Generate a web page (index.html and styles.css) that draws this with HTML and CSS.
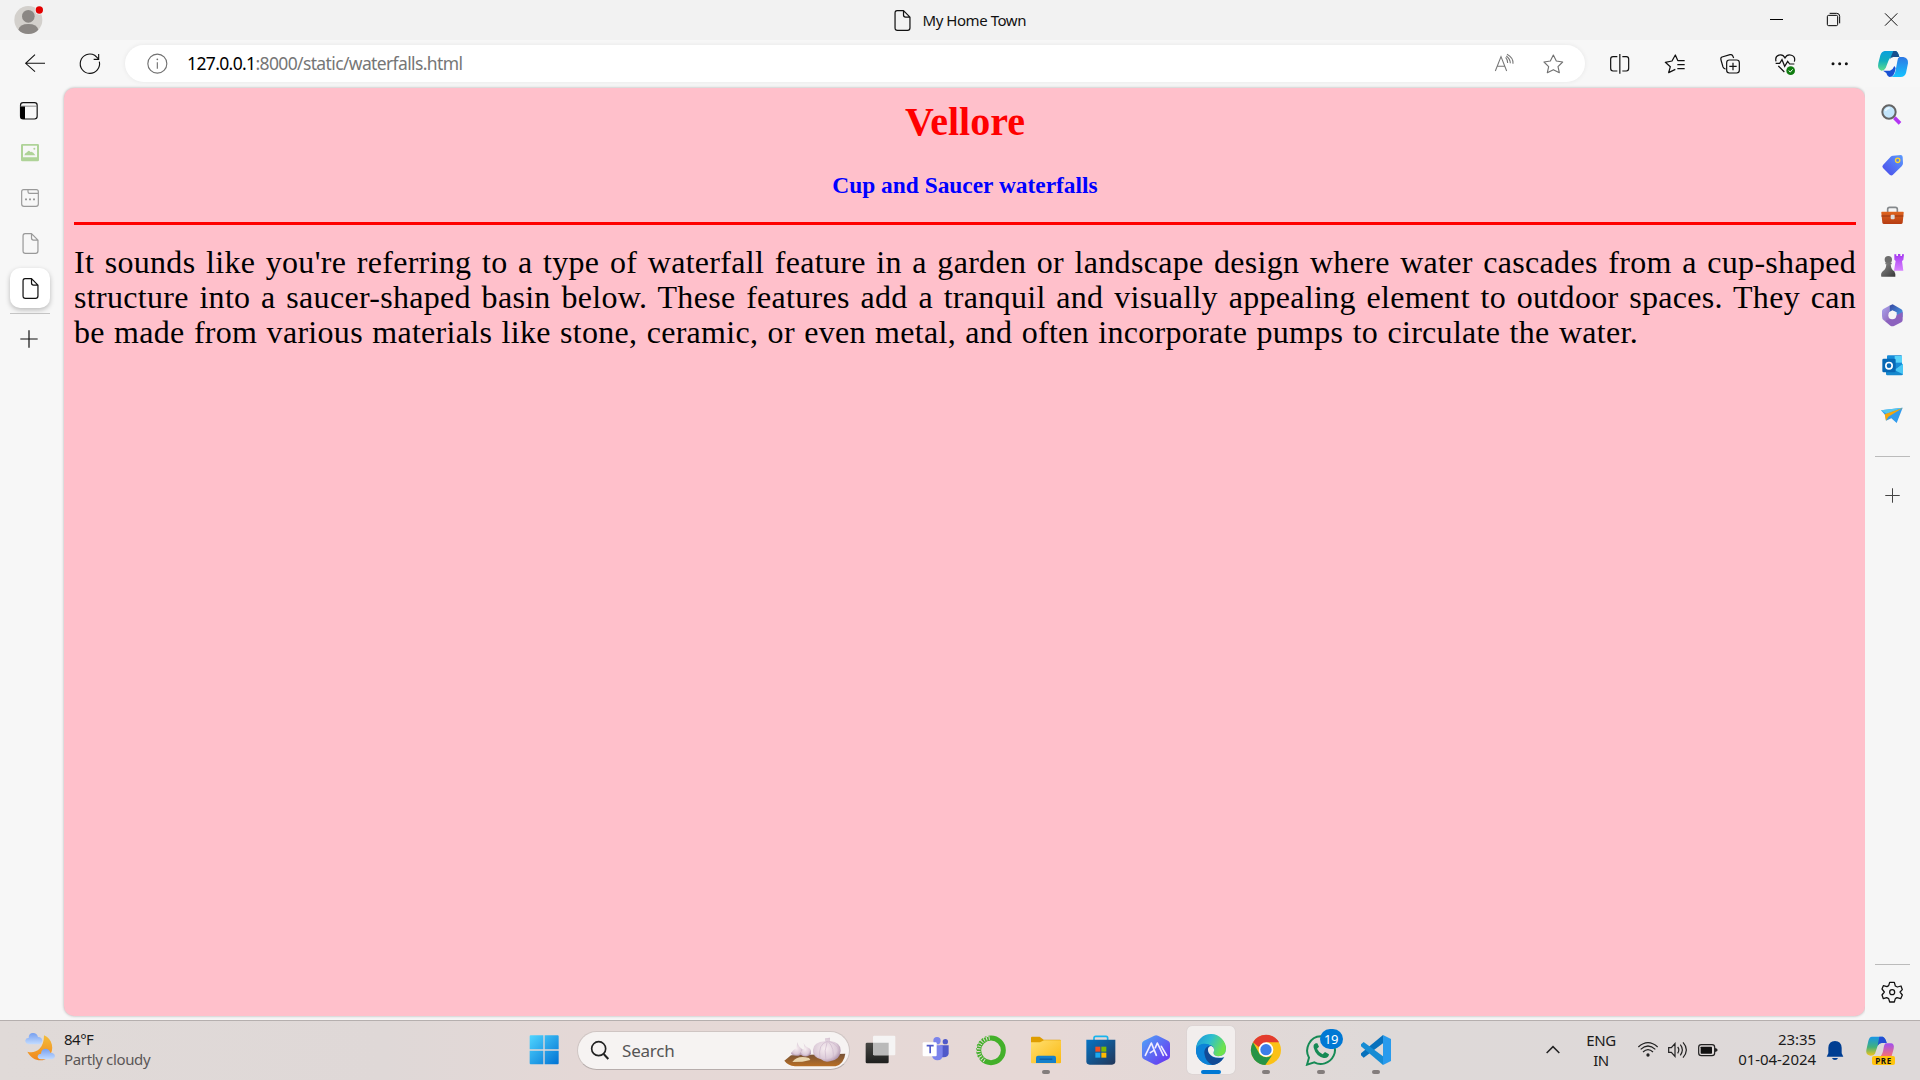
FILE: index.html
```html
<!DOCTYPE html>
<html lang="en">
<head>
<meta charset="utf-8">
<title>My Home Town</title>
<link rel="stylesheet" href="styles.css">
</head>
<body>
<svg class="defs" aria-hidden="true">
  <defs>
    <linearGradient id="gSky" x1="0" y1="0" x2="1" y2="1"><stop offset="0" stop-color="#50d5ff"/><stop offset="1" stop-color="#0072d3"/></linearGradient>
    <linearGradient id="gTeal" x1="0" y1="0" x2="0" y2="1"><stop offset="0" stop-color="#0aa0dd"/><stop offset=".5" stop-color="#13aebd"/><stop offset="1" stop-color="#61de8c"/></linearGradient>
    <linearGradient id="gBlue" x1="0" y1="0" x2="0" y2="1"><stop offset="0" stop-color="#2f78e4"/><stop offset="1" stop-color="#15c3ff"/></linearGradient>
    <linearGradient id="gTag" x1="1" y1="0" x2="0" y2="1"><stop offset="0" stop-color="#5b9bff"/><stop offset="1" stop-color="#4a48e8"/></linearGradient>
    <linearGradient id="gCase" x1="0" y1="0" x2="0" y2="1"><stop offset="0" stop-color="#e0651f"/><stop offset="1" stop-color="#b53c12"/></linearGradient>
    <linearGradient id="gRook" x1="0" y1="0" x2="0" y2="1"><stop offset="0" stop-color="#a436f0"/><stop offset="1" stop-color="#d884ff"/></linearGradient>
    <linearGradient id="gPawn" x1="0" y1="0" x2="1" y2="1"><stop offset="0" stop-color="#8c8c8c"/><stop offset="1" stop-color="#383838"/></linearGradient>
    <linearGradient id="gHexA" x1="0" y1="0" x2="1" y2="1"><stop offset="0" stop-color="#36459f"/><stop offset="1" stop-color="#4aa3ee"/></linearGradient>
    <linearGradient id="gHexB" x1="0" y1="0" x2="1" y2="1"><stop offset="0" stop-color="#a9a5ef"/><stop offset="1" stop-color="#8b5aae"/></linearGradient>
    <linearGradient id="gFolder" x1="0" y1="0" x2="1" y2="1"><stop offset="0" stop-color="#ffdf70"/><stop offset="1" stop-color="#fbb911"/></linearGradient>
    <linearGradient id="gStore" x1="0" y1="0" x2="1" y2="1"><stop offset="0" stop-color="#0674c4"/><stop offset="1" stop-color="#223658"/></linearGradient>
    <linearGradient id="gAi" x1="0" y1="0" x2="1" y2="1"><stop offset="0" stop-color="#4fa6f7"/><stop offset="1" stop-color="#6a2df0"/></linearGradient>
    <linearGradient id="gEdgeTop" x1="0" y1="0" x2="1" y2=".4"><stop offset="0" stop-color="#1b93d8"/><stop offset=".5" stop-color="#2dbed0"/><stop offset="1" stop-color="#6fe34b"/></linearGradient>
    <linearGradient id="gMoon" x1="0" y1="0" x2="0" y2="1"><stop offset="0" stop-color="#f3bd3a"/><stop offset="1" stop-color="#f1871e"/></linearGradient>
    <linearGradient id="gCloud" x1="0" y1="0" x2="0" y2="1"><stop offset="0" stop-color="#769ff0"/><stop offset="1" stop-color="#c3dcff"/></linearGradient>
    <linearGradient id="gRain" x1="0" y1="0" x2="0" y2="1"><stop offset="0" stop-color="#1695e8"/><stop offset=".55" stop-color="#43b17b"/><stop offset="1" stop-color="#f3c51a"/></linearGradient>
    <linearGradient id="gPink" x1="0" y1="0" x2="0" y2="1"><stop offset="0" stop-color="#a14ff0"/><stop offset="1" stop-color="#ff7368"/></linearGradient>
    <radialGradient id="gGarlic" cx=".45" cy=".45" r=".6"><stop offset="0" stop-color="#f7eef1"/><stop offset=".7" stop-color="#dccbd8"/><stop offset="1" stop-color="#a98da8"/></radialGradient>
    <linearGradient id="gBoard" x1="0" y1="0" x2="0" y2="1"><stop offset="0" stop-color="#755238"/><stop offset="1" stop-color="#b96f25"/></linearGradient>
    <linearGradient id="gDark" x1="0" y1="0" x2="0" y2="1"><stop offset="0" stop-color="#484845"/><stop offset="1" stop-color="#1e1f1e"/></linearGradient>
    <symbol id="page" viewBox="0 0 48 62"><path d="M8 2H27L46 21V53Q46 60 39 60H9Q2 60 2 53V9Q2 2 8 2ZM27 3V15Q27 21 33 21H45" fill="none" stroke="currentColor" stroke-width="3.6" stroke-linejoin="round"/></symbol>
    <symbol id="plus" viewBox="0 0 54 54"><path d="M27 1V53M1 27H53" stroke="currentColor" stroke-width="3.6"/></symbol>
  </defs>
</svg>

<header class="titlebar">
  <div class="profile">
    <svg width="32" height="32" viewBox="38 12 96 96"><circle cx="84" cy="60" r="42" fill="#d3d0cc"/><circle cx="84" cy="49" r="19" fill="#8b8784"/><path d="M54 89Q58 72 84 72Q110 72 114 89Q102 102 84 102Q66 102 54 89Z" fill="#8b8784"/><circle cx="117" cy="30" r="14" fill="#f2f2f2"/><circle cx="117" cy="30" r="11" fill="#e30000"/></svg>
  </div>
  <div class="window-title"><svg width="17" height="21"><use href="#page"/></svg><span>My Home Town</span></div>
  <div class="window-buttons">
    <svg width="57" height="40" viewBox="804 0 171 120"><path d="M870 58.5H909" stroke="#000" stroke-width="3"/></svg>
    <svg width="57" height="40" viewBox="975 0 171 120"><g fill="none" stroke="#000" stroke-width="3"><rect x="1042" y="46" width="31" height="31" rx="4"/><path d="M1049 40H1070Q1079 40 1079 49V70"/></g></svg>
    <svg width="58" height="40" viewBox="1146 0 174 120"><path d="M1215 40L1252 77M1252 40L1215 77" stroke="#111" stroke-width="3"/></svg>
  </div>
</header>

<div class="toolbar">
  <svg width="70" height="47" viewBox="0 120 210 141"><path d="M135 190H77M105 164L77 190L105 215" fill="none" stroke="#111" stroke-width="3.2"/></svg>
  <svg width="40" height="47" viewBox="210 120 120 141"><path d="M298 185A29 29 0 1 1 284 166L295 176M296 162V178H281" fill="none" stroke="#111" stroke-width="3.4"/></svg>
  <div class="address">
    <svg width="30" height="37" viewBox="426 135 90 111"><circle cx="472" cy="191" r="28.5" fill="none" stroke="#717171" stroke-width="3.4"/><path d="M472 187V206" stroke="#717171" stroke-width="3.4"/><circle cx="472" cy="178" r="2.6" fill="#717171"/></svg>
    <span class="url"><b>127.0.0.1</b>:8000/static/waterfalls.html</span>
    <svg width="49" height="37" viewBox="-2 135 147 111"><path d="M47 213L64 170L81 213M53 199H75M78 172Q84 179 84 189M82 163Q101 173 100 191M80 168Q92 177 92 190" fill="none" stroke="#767676" stroke-width="3.2"/></svg>
    <svg width="49" height="37" viewBox="145 135 147 111"><path d="M221 165L230 183L249 186L235 200L239 218L221 209L203 218L207 200L193 186L212 183Z" fill="none" stroke="#717171" stroke-width="3.4" stroke-linejoin="round"/></svg>
  </div>
  <div class="tools">
    <svg width="55" height="47" viewBox="335 120 165 141"><path d="M411 170H398Q391 170 391 177V205Q391 213 398 213H411M426 170H438Q445 170 445 177V205Q445 213 438 213H426M418.500 162V221" fill="none" stroke="#111" stroke-width="3.6"/></svg>
    <svg width="55" height="47" viewBox="501 120 165 141"><path d="M594 183L586 165L576 183L556 187L571 200L566 218L586 208M594 182H614M592 194H614M592 206H614" fill="none" stroke="#111" stroke-width="3.7" stroke-linejoin="round"/></svg>
    <svg width="55" height="47" viewBox="666 120 165 141"><rect x="740" y="180" width="38" height="39" rx="8" fill="none" stroke="#111" stroke-width="3.6"/><path d="M759 188V211M748 199H770M761 174L758 167Q756 163 750 164L726 171Q721 173 723 180L729 201Q732 207 737 207" fill="none" stroke="#111" stroke-width="3.6"/></svg>
    <svg width="55" height="47" viewBox="831 120 165 141"><path d="M888 184C883 164 907 158 915 174C923 158 949 164 943 185M887 190H899L906 179L914 199L923 184L929 192H943M895 198L913 216" fill="none" stroke="#111" stroke-width="3.6"/><circle cx="932" cy="212" r="13" fill="#107c10"/><path d="M926 212L931 216L938 208" fill="none" stroke="#fff" stroke-width="3"/></svg>
    <svg width="55" height="47" viewBox="997 120 165 141"><g fill="#111"><circle cx="1060" cy="191" r="4.500"/><circle cx="1080" cy="191" r="4.500"/><circle cx="1100" cy="191" r="4.500"/></g></svg>
  </div>
  <svg width="53" height="47" viewBox="1161 120 159 141"><path d="M1214 153H1247Q1254 155 1258 171H1240Q1230 171 1226 181L1217 204Q1212 213 1204 212Q1191 208 1195 190L1201 166Q1205 154 1214 153Z" fill="url(#gTeal)"/><path d="M1240 153H1247Q1254 155 1258 171H1240Q1232 171 1229 179Z" fill="#174f8e"/><path d="M1258 171H1270Q1285 173 1284 190L1278 219Q1274 231 1262 231H1233Q1244 228 1247 211L1252 184Q1253 174 1258 171Z" fill="url(#gBlue)"/><path d="M1209 212H1230Q1239 209 1243 198L1247 204Q1243 231 1229 231Q1222 230 1219 219Z" fill="#1851d3"/></svg>
</div>

<main class="workspace">
  <nav class="tabs">
    <svg class="t1" width="20" height="20" viewBox="57 302 60 60"><rect x="61.500" y="307" width="50" height="49" rx="8" fill="none" stroke="#111" stroke-width="3.500"/><path d="M61 318H75V356H68Q61 356 61 349Z" fill="#000"/><path d="M61 317.500H112" stroke="#777" stroke-width="2.500"/></svg>
    <svg class="t2" width="20" height="20" viewBox="60 430 60 60"><path d="M67 433H113Q117 433 117 437V481Q117 485 113 485H67Q63 485 63 481V437Q63 433 67 433ZM69 438V473H111V438Z" fill="#afd398" fill-rule="evenodd"/><path d="M73 467Q75 459 81 458Q86 449 91 457Q98 453 106 467Z" fill="#afd398"/><circle cx="103" cy="447" r="3" fill="#afd398"/></svg>
    <svg class="t3" width="20" height="20" viewBox="60 564 60 60"><path d="M71 569H109Q115 569 115 575V612Q115 619 108 619H72Q65 619 65 612V575Q65 569 71 569ZM84 570V575Q84 580 89 580H114" fill="none" stroke="#999" stroke-width="3.500"/><path d="M75 598H81M87 598H93M99 598H105" stroke="#999" stroke-width="5"/></svg>
    <svg class="t4" width="17" height="21"><use href="#page"/></svg>
    <div class="active-tab"><svg width="17" height="21"><use href="#page"/></svg></div>
    <i class="tab-line"></i>
    <svg class="t6" width="18" height="18"><use href="#plus"/></svg>
  </nav>

  <article class="document">
    <h1>Vellore</h1>
    <h2>Cup and Saucer waterfalls</h2>
    <hr>
    <p><span class="l1">It sounds like you're referring to a type of waterfall feature in a garden or landscape design where water cascades from a cup-shaped</span> <span class="l2">structure into a saucer-shaped basin below. These features add a tranquil and visually appealing element to outdoor spaces. They can</span> <span class="l3">be made from various materials like stone, ceramic, or even metal, and often incorporate pumps to circulate the water.</span></p>
  </article>

  <aside class="sidebar">
    <svg width="28" height="50" viewBox="114 30 84 150"><path d="M163 113L180 130" stroke="#b335f3" stroke-width="11"/><circle cx="147" cy="96" r="20" fill="#c3e5fb" stroke="#646464" stroke-width="6"/><path d="M136 93Q140 84 149 84" stroke="#e9f7ff" stroke-width="5" fill="none"/></svg>
    <svg width="28" height="50" viewBox="114 181 84 150"><path d="M159 228L183 226Q188 227 188 232L189 251Q189 256 185 260L158 286Q154 289 149 285L129 265Q125 261 129 256L152 231Q155 228 159 228Z" fill="url(#gTag)"/><circle cx="173" cy="242" r="6.500" fill="#5b83ea" stroke="#ffd52b" stroke-width="4"/></svg>
    <svg width="28" height="50" viewBox="114 331 84 150"><path d="M143 397V389Q143 383 149 383H166Q172 383 172 389V397" fill="none" stroke="#84888b" stroke-width="5"/><path d="M126 396H189Q192 396 191 400L188 429Q187 433 183 433H132Q128 433 127 429L124 400Q123 396 126 396Z" fill="url(#gCase)"/><path d="M124 409H190" stroke="#963615" stroke-width="3"/><rect x="152" y="405" width="12" height="14" rx="3" fill="#ddd"/></svg>
    <svg width="28" height="50" viewBox="114 480 84 150"><path d="M163 523H169V528H174V522H181V528H186V523H192L190 540L186 543L190 572H162L167 543L163 539Z" fill="url(#gRook)"/><circle cx="145" cy="539" r="11" fill="#6d6d6d"/><path d="M136 548H155V553H152Q153 569 163 574Q168 584 166 590H124Q121 580 129 573Q138 568 139 553H136Z" fill="url(#gPawn)"/></svg>
    <svg width="28" height="50" viewBox="114 630 84 150"><path d="M148 677L158 673L184 688Q188 690 188 696V712L170 705V697L157 691L148 697Z" fill="url(#gHexA)"/><path d="M148 677V705Q148 713 161 720L148 727L131 720Q126 717 126 708V694Q126 690 130 687Z" fill="url(#gHexB)"/><path d="M128 718Q137 725 148 718L170 705L188 696V720Q188 724 184 727L162 738Q156 740 151 737Z" fill="#8c62be"/><circle cx="157" cy="706" r="12" fill="#f6f6f6"/></svg>
    <svg width="28" height="50" viewBox="114 780 84 150"><rect x="141" y="826" width="45" height="45" rx="3" fill="#168bd8"/><path d="M164 828H186V848H164Z" fill="#58d3fa"/><path d="M138 857L163 867L189 851V882Q189 886 184 886H142Q138 886 138 882Z" fill="#1688ce"/><path d="M163 870L189 851V883Z" fill="#49c7f5"/><rect x="127" y="836" width="40" height="41" rx="4" fill="#0768b5"/><circle cx="147" cy="857" r="9.500" fill="none" stroke="#fff" stroke-width="5"/></svg>
    <svg width="28" height="50" viewBox="114 930 84 150"><path d="M123 991L188 983L170 1029L154 1015L138 1022L136 1006Z" fill="#319bed"/><path d="M123 991L188 983L139 1001Z" fill="#56c7ef"/><path d="M134 1003L188 984L145 1010L138 1022Z" fill="#f5a70c"/></svg>
    <i class="side-line"></i>
    <svg class="add" width="15" height="15"><use href="#plus"/></svg>
    <i class="side-line last"></i>
    <svg class="gear" width="24" height="24" viewBox="121 121 72 72"><path d="M150 128H164L167 139L173 142L184 139L188 150L181 157L188 166L183 177L172 174L167 177L164 187H150L147 177L141 174L131 177L127 166L134 157L127 148L131 138L142 141L147 138Z" fill="none" stroke="#111" stroke-width="3.800" stroke-linejoin="round"/><circle cx="157.500" cy="157.500" r="7.500" fill="none" stroke="#111" stroke-width="3.800"/></svg>
  </aside>
</main>

<footer class="taskbar">
  <div class="weather">
    <svg width="34" height="36" viewBox="69 60 102 108"><path d="M132 79C157 89 165 122 147 143C128 162 97 156 82 128C100 134 132 127 132 79Z" fill="url(#gMoon)"/><path d="M87 106Q75 104 76 94Q78 86 86 87Q86 72 99 72Q111 72 114 84Q126 84 127 95Q126 106 115 106Z" fill="url(#gCloud)"/><path d="M123 151Q112 150 113 141Q115 134 123 134Q124 119 138 119Q149 120 151 131Q164 131 165 142Q163 151 153 151Z" fill="url(#gCloud)"/></svg>
    <div><span class="temp">84°F</span><span class="sky">Partly cloudy</span></div>
  </div>

  <div class="apps">
    <svg width="30" height="30" viewBox="0 0 90 90"><path d="M2 4Q2 1 5 1H43V43H2ZM47 1H86Q89 1 89 4V43H47ZM2 47H43V88H5Q2 88 2 85ZM47 47H89V85Q89 88 86 88H47Z" fill="url(#gSky)"/></svg>
    <div class="search">
      <svg width="20" height="20" viewBox="241 90 60 60"><circle cx="267" cy="116" r="21" fill="none" stroke="#222" stroke-width="5"/><path d="M282 132L296 147" stroke="#222" stroke-width="6"/></svg>
      <span>Search</span>
      <svg class="garlic" width="62" height="30" viewBox="825 82 186 90"><path d="M826 153L846 137L1009 132Q1005 162 980 170H858Q836 167 826 153Z" fill="url(#gBoard)"/><path d="M850 157Q866 135 900 145L904 151L880 156Z" fill="#ead6ae"/><path d="M865 98Q868 111 880 119Q886 135 869 138Q848 139 846 130Q850 122 862 115Z" fill="url(#gGarlic)"/><path d="M884 101Q889 112 903 117Q912 134 895 140Q875 142 874 129Q880 120 887 116Z" fill="url(#gGarlic)"/><path d="M948 86L963 84L963 94Q995 97 995 123Q993 149 966 154Q948 160 936 149Q910 142 912 120Q914 97 948 95Z" fill="url(#gGarlic)"/><path d="M955 95Q926 103 933 146M955 95Q944 122 951 154M957 95Q979 116 971 151M959 95Q984 101 990 124" fill="none" stroke="#cbb5ca" stroke-width="2"/></svg>
    </div>
    <div class="app"><svg width="32" height="30" viewBox="1066 77 96 90"><rect x="1068" y="100" width="69" height="62" rx="4" fill="url(#gDark)"/><rect x="1090" y="79" width="67" height="59" rx="4" fill="#f5f4f4"/><path d="M1090 100H1137V138H1094Q1090 138 1090 134Z" fill="#bababa"/></svg></div>
    <div class="app"><svg width="28" height="30" viewBox="1237 77 84 90"><circle cx="1282" cy="94" r="11" fill="#7b83eb"/><circle cx="1307" cy="97" r="8" fill="#5059c9"/><path d="M1292 108H1317V132Q1316 144 1302 144H1292Z" fill="#5059c9"/><path d="M1267 108H1299V136Q1299 153 1283 153Q1271 153 1267 140Z" fill="#7b83eb"/><rect x="1239" y="99" width="42" height="42" rx="3" fill="#fff"/><path d="M1251 109H1272M1261.500 109V132" stroke="#5059c9" stroke-width="5"/></svg></div>
    <div class="app"><svg width="32" height="32" viewBox="45 71 96 96"><circle cx="93" cy="120" r="37" fill="none" stroke="#43b02a" stroke-width="15"/><path d="M89 83A37 37 0 0 0 75 152" fill="none" stroke="#e5d8d6" stroke-width="11" stroke-dasharray="3 5"/><path d="M85 77A43 43 0 0 0 62 151" fill="none" stroke="#e5d8d6" stroke-width="4" stroke-dasharray="6 6"/></svg></div>
    <div class="app running"><svg width="32" height="32" viewBox="210 73 96 96"><path d="M213 84Q213 81 216 81H239L251 90H300Q303 90 303 94V115H213Z" fill="#df9d00"/><path d="M213 98H240L252 92H303V158Q303 161 300 161H216Q213 161 213 158Z" fill="url(#gFolder)"/><path d="M228 160V144Q228 138 234 138H282Q288 138 288 144V160Z" fill="#1580cb"/><path d="M239 148.500H277" stroke="#07519a" stroke-width="3"/></svg></div>
    <div class="app"><svg width="32" height="32" viewBox="374 73 96 96"><path d="M401 93V85Q401 80 406 80H437Q442 80 442 85V93" fill="none" stroke="#19b4ed" stroke-width="5"/><path d="M378 90H465V155Q465 165 455 165H388Q378 165 378 155Z" fill="url(#gStore)"/><path d="M405 111H420V126H405Z" fill="#f25022"/><path d="M423 111H438V126H423Z" fill="#7fba00"/><path d="M405 129H420V144H405Z" fill="#1ba9ef"/><path d="M423 129H438V144H423Z" fill="#ffb900"/></svg></div>
    <div class="app"><svg width="32" height="32" viewBox="540 72 96 96"><path d="M583 77Q588 74 594 77L624 92Q630 95 630 101V139Q630 145 624 148L594 163Q588 166 582 163L552 148Q546 145 546 139V101Q546 95 552 92Z" fill="url(#gAi)"/><path d="M556 136L574 99L589 136M571 128L582 121M586 113L592 99L610 136M604 109L620 136" fill="none" stroke="#f1edff" stroke-width="5" stroke-linecap="round" stroke-linejoin="round"/></svg></div>
    <div class="app current"><svg width="32" height="32" viewBox="705 72 96 96"><circle cx="753" cy="120" r="45" fill="#0b67b8"/><path d="M708 116A45 45 0 0 1 798 118Q798 138 775 139Q758 137 761 126Q767 107 745 104Q721 99 708 116Z" fill="url(#gEdgeTop)"/><path d="M708 118C714 98 745 98 752 108Q731 111 733 130Q735 159 765 163Q746 168 729 158Q706 144 708 118Z" fill="#0c83d7"/><path d="M733 126Q736 110 749 108Q742 116 746 128Q757 151 792 142Q777 165 757 165Q735 155 733 126Z" fill="#124b96"/><path d="M745 113Q749 107 754 108Q766 113 761 126Q758 137 775 139Q798 138 798 118L802 118V137L792 142Q760 148 747 130Q742 121 745 113Z" fill="#f2f0ef"/></svg></div>
    <div class="app running"><svg width="32" height="32" viewBox="870 72 96 96"><circle cx="918" cy="120" r="45" fill="#fbc116"/><path d="M879 97Q864 124 883 149Q898 165 916 165L939 132Q923 150 900 134Z" fill="#269447"/><path d="M879 97A45 45 0 0 1 957 97H918V110H895Z" fill="#e33b2e"/><circle cx="918" cy="119" r="22" fill="#fff"/><circle cx="918" cy="119" r="17" fill="#3c7ee8"/></svg></div>
    <div class="app running"><svg width="32" height="32" viewBox="1035 71 96 96"><path d="M1041 163L1047 142C1032 116 1049 79 1082 78C1115 78 1133 111 1121 136C1109 161 1081 166 1063 156Z" fill="none" stroke="#168a55" stroke-width="6"/><path d="M1067 99Q1059 102 1061 112Q1068 137 1091 143Q1105 145 1107 132L1095 125L1088 132Q1076 126 1071 115L1077 109L1072 99Z" fill="#168a55"/></svg><b class="badge">19</b></div>
    <div class="app running"><svg width="32" height="32" viewBox="1200 72 96 96"><path d="M1269 75L1293 87V153L1269 165Z" fill="#299bed"/><path d="M1269 75V100L1211 143L1203 136V130Z" fill="#0871bc"/><path d="M1269 165V139L1211 96L1203 103V109Z" fill="#168cd4"/></svg></div>
  </div>

  <div class="tray">
    <svg class="chev" width="16" height="12" viewBox="135 102 48 36"><path d="M140 129L159 110L178 129" fill="none" stroke="#222" stroke-width="4.500"/></svg>
    <div class="lang"><span>ENG</span><span>IN</span></div>
    <svg class="status" width="84" height="20" viewBox="411 90 252 60"><g fill="none" stroke="#222" stroke-width="3.600"><path d="M415 111Q444 85 473 111M422 118Q444 98 466 118M429 126Q444 112 459 126"/><path d="M506 113H514L525 101V139L514 127H506ZM533 111Q540 119 533 130M541 104Q553 119 541 136M549 97Q569 119 549 143"/><rect x="596" y="104" width="48" height="33" rx="8"/></g><circle cx="444" cy="135" r="5" fill="#222"/><rect x="602" y="110" width="34" height="21" rx="2" fill="#111"/><path d="M645 114Q653 115 653 120Q653 125 645 126Z" fill="#222"/></svg>
    <div class="clock"><span>23:35</span><span>01-04-2024</span></div>
    <svg class="bell" width="18" height="22" viewBox="978 90 54 66"><path d="M980 140L985 130V113Q986 94 1005 93Q1024 94 1025 113V130L1030 140ZM996 144H1014Q1012 150 1005 150Q998 150 996 144Z" fill="#003e92"/></svg>
    <div class="copilot"><svg width="32" height="28" viewBox="1095 80 96 84"><path d="M1116 82H1148Q1156 84 1160 101H1145Q1136 101 1132 112L1125 133Q1122 139 1112 139Q1096 137 1099 122L1105 95Q1108 82 1116 82Z" fill="url(#gRain)"/><path d="M1138 82H1148Q1156 84 1160 101H1145Q1137 101 1133 109Z" fill="#224dd4"/><path d="M1157 102H1174Q1184 104 1181 118L1174 144H1139Q1147 137 1150 121Q1152 105 1157 102Z" fill="url(#gPink)"/></svg><b>PRE</b></div>
  </div>
</footer>
</body>
</html>
```
FILE: styles.css
```css
* { box-sizing: border-box; }
body {
  margin: 0;
  width: 1920px;
  height: 1080px;
  overflow: hidden;
  display: flex;
  flex-direction: column;
  background: #f7f7f7;
  color: #111;
  font-family: "Noto Sans", "Open Sans", sans-serif;
}
svg { display: block; flex: none; }
.defs { width: 0; height: 0; position: absolute; }

.titlebar {
  height: 40px;
  flex: none;
  background: #f2f2f2;
  display: grid;
  grid-template-columns: 1fr auto 1fr;
}
.profile { padding: 4px 0 0 12.6px; }
.window-title {
  display: flex;
  gap: 11.500px;
  padding: 10px 0 0 0;
  width: 132px;
  font-size: 15px;
  line-height: 21px;
  white-space: nowrap;
  letter-spacing: -.45px;
}
.window-buttons { display: flex; justify-content: flex-end; }

.toolbar { height: 47px; flex: none; display: flex; }
.address {
  width: 1460px;
  height: 37px;
  margin: 5px 7px 0 15px;
  padding-left: 17px;
  border-radius: 19px;
  background: #fff;
  box-shadow: 0 0 5px rgba(0, 0, 0, .07);
  display: flex;
}
.url {
  flex: 1;
  padding-left: 15px;
  font-size: 17.500px;
  line-height: 36px;
  letter-spacing: -.63px;
  color: #767676;
}
.url b { font-weight: 400; color: #000; }
.address svg:last-child { margin-right: 8px; }
.tools { display: flex; }

.workspace { flex: 1; display: flex; min-height: 0; }
.tabs {
  width: 64px;
  display: flex;
  flex-direction: column;
  color: #111;
}
.t1 { margin: 14px 0 0 19px; }
.t2 { margin: 22px 0 0 20px; }
.t3 { margin: 25px 0 0 20px; }
.t4 { margin: 24.500px 0 0 21.500px; color: #999; }
.active-tab {
  width: 40px;
  height: 40px;
  margin: 14.500px 0 0 10px;
  padding: 9.500px 0 0 11.500px;
  border-radius: 10px;
  background: #fff;
  box-shadow: 0 2px 5px rgba(0, 0, 0, .25);
}
.tab-line { width: 40px; height: 1px; margin: 5px 0 0 10px; background: #c4c4c4; }
.t6 { margin: 16px 0 0 20px; }

.document {
  width: 1801px;
  height: 928px;
  margin-top: 1px;
  padding: 11px 9px 0 10px;
  border-radius: 10px;
  background: #ffc0cb;
  box-shadow: 0 0 3px rgba(0, 0, 0, .3);
  color: #000;
}
h1, h2 { margin: 0; text-align: center; font-family: "Liberation Serif", serif; font-weight: 700; }
h1 { font-size: 40px; line-height: 46px; color: #f00; }
h2 { margin-top: 27px; font-size: 23.400px; line-height: 27px; letter-spacing: 0; color: #00f; }
hr { height: 3px; margin: 23px 0 20px; border: 0; background: #f00; }
p { margin: 0; font-family: Georgia, "Liberation Serif", serif; font-size: 32px; line-height: 35px; }
p span { display: block; white-space: nowrap; text-align-last: justify; letter-spacing: .3px; }
.l3 { width: 1564px; }

.sidebar {
  flex: 1;
  display: flex;
  flex-direction: column;
  align-items: center;
  padding: 3px 1px 0 0;
  background: #f6f6f6;
}
.side-line { width: 35px; height: 1px; margin-top: 16px; background: #bbb; }
.add { margin-top: 31px; color: #444; }
.side-line.last { margin-top: auto; }
.gear { margin: 15px 0 16px; }

.taskbar {
  height: 60px;
  flex: none;
  display: flex;
  position: relative;
  border-top: 1px solid #b5afae;
  background: linear-gradient(90deg, #e0dad8 0, #dfd8d7 20%, #e5d8d6 32%, #e6d8d6 55%, #ded9d8 72%, #ded9d9 100%);
}
.weather { width: 529px; display: flex; padding: 8px 0 0 23px; gap: 7px; }
.weather span { display: block; line-height: 20px; font-size: 15px; white-space: nowrap; }
.temp { color: #1b1b1b; letter-spacing: -.5px; }
.sky { color: #5b5757; letter-spacing: -.35px; }
.apps { display: flex; align-items: center; height: 58px; }
.search {
  width: 273px;
  height: 39px;
  margin: 0 3px 0 18px;
  padding-left: 12px;
  border: 1px solid #cfc5c3;
  border-bottom-color: #b7adac;
  border-radius: 20px;
  background: #f6f3f2;
  display: flex;
  align-items: center;
  font-size: 17px;
  color: #555;
}
.search span { flex: 1; padding-left: 12px; letter-spacing: -.2px; }
.garlic { margin: 4px 3px 0 0; }
.app {
  width: 48px;
  height: 48px;
  margin: 0 3.500px;
  display: flex;
  align-items: center;
  justify-content: center;
  position: relative;
  border-radius: 5px;
}
.running::after, .current::after {
  content: "";
  position: absolute;
  bottom: 0;
  left: 20px;
  width: 8px;
  height: 4px;
  border-radius: 2px;
  background: #837d7c;
}
.current { background: #f2eeed; box-shadow: 0 0 1px #bbb; }
.current::after { left: 14px; width: 20px; background: #0078d4; }
.badge {
  position: absolute;
  top: 3px;
  right: 2px;
  width: 23px;
  height: 20px;
  border-radius: 10px;
  background: #0078d4;
  color: #fff;
  font-size: 13px;
  font-weight: 400;
  line-height: 20px;
  letter-spacing: -.5px;
  text-align: center;
}
.tray { margin-left: auto; display: flex; font-size: 15px; line-height: 20px; color: #1b1b1b; }
.tray span { display: block; white-space: nowrap; }
.chev { margin-top: 23px; }
.lang { width: 40px; margin: 9px 0 0 20px; text-align: center; letter-spacing: -.4px; }
.status { margin: 19px 0 0 16px; }
.clock { width: 95px; margin-top: 8px; text-align: right; letter-spacing: -.05px; }
.bell { margin: 19px 0 0 10px; }
.copilot { position: relative; margin: 15px 23px 0 21px; }
.copilot b {
  position: absolute;
  left: 7px;
  top: 20px;
  width: 23px;
  height: 9px;
  border-radius: 2px;
  background: #ffc40d;
  font: 700 8px/9px "Open Sans", sans-serif;
  letter-spacing: .5px;
  text-align: center;
  color: #111;
}
```
